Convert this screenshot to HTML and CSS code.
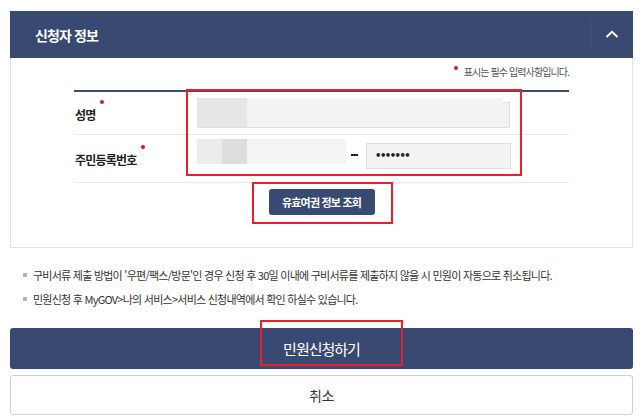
FILE: index.html
```html
<!DOCTYPE html>
<html lang="ko">
<head>
<meta charset="utf-8">
<title>신청자 정보</title>
<link rel="stylesheet" href="styles.css">
</head>
<body>
<div class="page">
  <section class="panel">
    <header class="panel-head">
      <h2 class="panel-title">신청자 정보</h2>
      <button class="toggle" type="button" aria-label="접기">
        <svg width="14" height="8" viewBox="0 0 14 8"><polyline points="1.5,7 7,1.8 12.5,7" fill="none" stroke="#fff" stroke-width="2"/></svg>
      </button>
    </header>
    <div class="panel-body">
      <p class="req-note"><span class="dot"></span>표시는 필수 입력사항입니다.</p>
      <div class="form-table">
        <div class="row row-name">
          <div class="label">성명<span class="dot"></span></div>
          <div class="field"><div class="input input-name"><div class="masked-name"></div></div></div>
        </div>
        <div class="row row-id">
          <div class="label">주민등록번호<span class="dot"></span></div>
          <div class="field">
            <div class="masked"></div>
            <span class="dash"></span>
            <div class="input input-pw">•••••••</div>
          </div>
        </div>
      </div>
      <div class="btn-row"><button class="btn-passport" type="button">유효여권 정보 조회</button></div>
    </div>
  </section>
  <ul class="notes">
    <li>구비서류 제출 방법이 '우편/팩스/방문'인 경우 신청 후 30일 이내에 구비서류를 제출하지 않을 시 민원이 자동으로 취소됩니다.</li>
    <li>민원신청 후 MyGOV&gt;나의 서비스&gt;서비스 신청내역에서 확인 하실수 있습니다.</li>
  </ul>
  <div class="actions">
    <button class="btn-submit" type="button">민원신청하기</button>
    <button class="btn-cancel" type="button">취소</button>
  </div>
  <div class="mark mark-fields"></div>
  <div class="mark mark-passport"></div>
  <div class="mark mark-submit"></div>
</div>
</body>
</html>
```
FILE: styles.css
```css
* { box-sizing: border-box; }
html, body { margin: 0; padding: 0; background: #fff; }
body { font-family: "Noto Sans CJK KR", "Noto Sans", sans-serif; color: #222; }

.page { position: relative; width: 640px; height: 417px; padding-top: 11px; overflow: hidden; }

.panel { margin: 0 7px 0 10px; }
.panel-head { height: 47px; background: #394a72; display: flex; align-items: center; padding-left: 25px; }
.panel-title { flex: 1; margin: 0; font-size: 14px; font-weight: 700; color: #fff; letter-spacing: -0.9px; line-height: 20px; }
.toggle { width: 43px; height: 32px; padding: 0; border: 0; border-left: 1px solid #45567d; background: transparent; display: flex; align-items: center; justify-content: center; }
.toggle svg { display: block; margin-top: -1px; }

.panel-body { height: 190px; border: 1px solid #e2e2e2; border-top: 0; padding: 7px 63px 0; }
.req-note { margin: 0 0 11px; text-align: right; font-size: 10px; line-height: 14px; color: #555; letter-spacing: -0.9px; }
.dot { display: inline-block; width: 4px; height: 4px; border-radius: 50%; background: #e3141c; vertical-align: top; }
.req-note .dot { margin: 1px 6px 0 0; }

.form-table { border-top: 2px solid #3d4c72; }
.row { display: flex; border-bottom: 1px solid #e9e9e9; }
.row-name { height: 43px; align-items: center; }
.row-id { height: 48px; }
.label { width: 123px; padding-left: 1px; font-size: 12px; font-weight: 700; letter-spacing: -0.8px; line-height: 16px; color: #222; }
.row-name .label { margin-top: 4px; }
.label .dot { margin: -7px 0 0 5px; }
.row-id .label { align-self: center; margin-top: 3px; }

.field { display: flex; }
.input { background: #f3f3f3; border: 1px solid #dfdfdf; }
.input-name { position: relative; width: 313px; height: 26px; margin-top: 4px; }
.masked-name { position: absolute; left: -1px; top: -5px; width: 306px; height: 29px; background: linear-gradient(to right, #e6e6e6 0, #e6e6e6 50px, #f3f3f3 50px); }
.masked { margin-top: 4px; width: 149px; height: 25px; background: linear-gradient(to right, #ececec 0, #ececec 25px, #dedede 25px, #dedede 50px, #f4f4f4 50px); }
.dash { width: 7px; height: 2px; background: #222; margin: 19px 8px 0 5px; }
.input-pw { margin-top: 8px; width: 145px; height: 26px; padding-left: 8px; font-family: "DejaVu Sans", sans-serif; font-size: 10px; font-weight: 700; line-height: 24px; letter-spacing: -1.5px; color: #222; }

.btn-row { display: flex; justify-content: center; padding-top: 6px; }
.btn-passport { width: 106px; height: 26px; padding: 0; border: 0; border-radius: 3px; background: #394a72; color: #fff; font-family: inherit; font-size: 11px; font-weight: 700; letter-spacing: -0.8px; line-height: 26px; }

.notes { list-style: none; margin: 19px 0 0; padding: 0 0 0 33px; display: flex; flex-direction: column; gap: 8px; }
.notes li { position: relative; font-size: 11px; line-height: 16px; color: #333; letter-spacing: -0.75px; }
.notes li::before { content: ""; position: absolute; left: -10px; top: 6px; width: 4px; height: 4px; background: #b5b5b5; }

.actions { margin: 21px 7px 0 10px; display: flex; flex-direction: column; gap: 6px; }
.btn-submit { height: 41px; border: 0; border-radius: 3px; background: #394a72; color: #fff; font-family: inherit; font-size: 15px; letter-spacing: -1px; }
.btn-cancel { height: 40px; border: 1px solid #cfcfcf; border-radius: 3px; background: #fff; color: #333; font-family: inherit; font-size: 14px; letter-spacing: -0.5px; }

.mark { position: absolute; border: 2px solid #e8202a; pointer-events: none; }
.mark-fields { left: 186px; top: 89px; width: 336px; height: 87px; }
.mark-passport { left: 252px; top: 182px; width: 141px; height: 42px; }
.mark-submit { left: 260px; top: 320px; width: 143px; height: 46px; }
```
